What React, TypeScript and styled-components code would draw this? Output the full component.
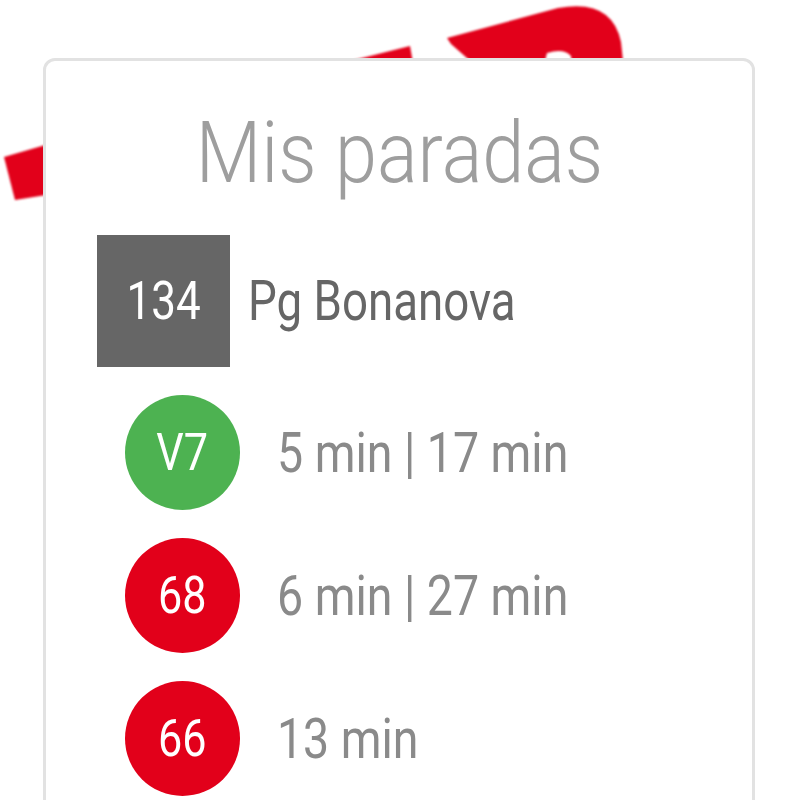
import styled, { createGlobalStyle } from 'styled-components';

const GlobalStyle = createGlobalStyle`
  html, body {
    margin: 0;
    background: #ffffff;
    overflow: hidden;
  }
  body {
    font-family: Roboto, "Liberation Sans", sans-serif;
  }
`;

type Line = { code: string; color: string; times: string };

const lines: Line[] = [
  { code: 'V7', color: '#4db251', times: '5 min | 17 min' },
  { code: '68', color: '#e2001a', times: '6 min | 27 min' },
  { code: '66', color: '#e2001a', times: '13 min' },
];

function BrandMark() {
  // red logo peeking out behind the card
  return (
    <Mark width="800" height="220" viewBox="0 0 800 220">
      <path d="M4 157 L90 132 L90 188 L15 200 Z" fill="#e2001a" />
      <path d="M350 61 L410 46 L416 80 L350 80 Z" fill="#e2001a" />
      <path
        d="M447 38 L558 8 Q612 -2 621 42 L625 80 L574 80 L571 56 Q564 48 547 53 L540 80 L492 80 L451 44 Z"
        fill="#e2001a"
      />
    </Mark>
  );
}

function App() {
  return (
    <>
      <GlobalStyle />
      <Screen>
        <BrandMark />
        <Card>
          <Title>
            <Squeeze $origin="center" $scale={0.88}>Mis paradas</Squeeze>
          </Title>
          <List>
            <StopRow>
              <StopCode>
                <Squeeze $origin="center">134</Squeeze>
              </StopCode>
              <StopName>
                <Squeeze>Pg Bonanova</Squeeze>
              </StopName>
            </StopRow>
            {lines.map((l) => (
              <LineRow key={l.code}>
                <LineBadge $color={l.color}>
                  <Squeeze $origin="center">{l.code}</Squeeze>
                </LineBadge>
                <Times>
                  <Squeeze>{l.times}</Squeeze>
                </Times>
              </LineRow>
            ))}
          </List>
        </Card>
      </Screen>
    </>
  );
}

export default App;

const Screen = styled.div`
  position: relative;
  width: 800px;
  height: 800px;
  overflow: hidden;
  background: #fff;
`;

const Mark = styled.svg`
  position: absolute;
  top: 0;
  left: 0;
  filter: blur(1px);
`;

const Card = styled.div`
  position: relative;
  z-index: 1;
  box-sizing: border-box;
  width: 712px;
  height: 800px;
  margin: 58px 0 0 43px;
  padding-top: 42px;
  background: #fff;
  border: 3px solid #e2e2e2;
  border-radius: 12px;
`;

// condensed look, Roboto Condensed is not around
const Squeeze = styled.span<{ $origin?: string; $scale?: number }>`
  display: inline-block;
  white-space: nowrap;
  transform: scaleX(${(p) => p.$scale || 0.83});
  transform-origin: ${(p) => p.$origin || 'left'} center;
`;

const Title = styled.h1`
  margin: 0;
  text-align: center;
  font-size: 86px;
  line-height: 100px;
  font-weight: 300;
  color: #9e9e9e;
`;

const List = styled.div`
  display: flex;
  flex-direction: column;
  gap: 28px;
  padding: 32px 0 0 51px;
`;

const StopRow = styled.div`
  display: flex;
  align-items: center;
  gap: 18px;
`;

const StopCode = styled.div`
  width: 133px;
  height: 132px;
  display: flex;
  align-items: center;
  justify-content: center;
  background: #666666;
  color: #fff;
  font-size: 53px;
`;

const StopName = styled.div`
  font-size: 55px;
  color: #666666;
`;

const LineRow = styled.div`
  display: flex;
  align-items: center;
  gap: 37px;
  padding-left: 28px;
`;

const LineBadge = styled.div<{ $color: string }>`
  width: 115px;
  height: 115px;
  border-radius: 50%;
  display: flex;
  align-items: center;
  justify-content: center;
  background: ${(p) => p.$color};
  color: #fff;
  font-size: 52px;
`;

const Times = styled.div`
  font-size: 56px;
  color: #8a8a8a;
`;
